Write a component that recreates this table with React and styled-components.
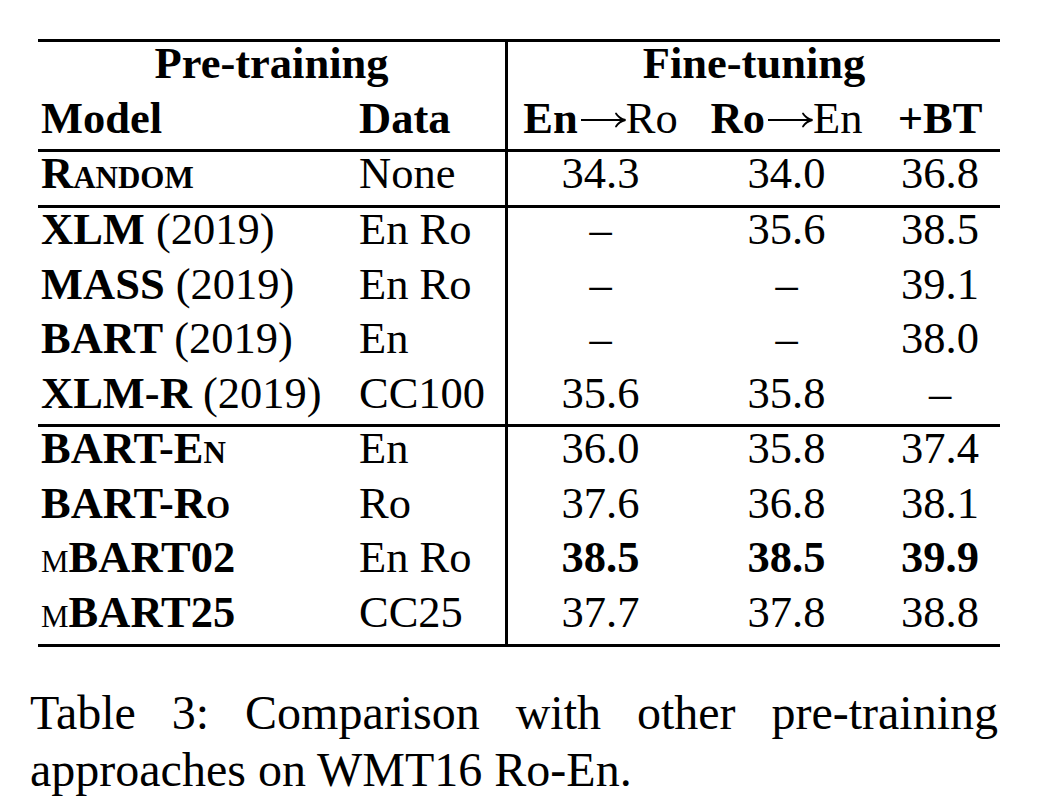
import React from "react";
import styled, { createGlobalStyle } from "styled-components";

const GlobalStyle = createGlobalStyle`
  html, body {
    margin: 0;
    padding: 0;
    background: #fff;
  }
  body {
    font-family: "Liberation Serif", "Times New Roman", serif;
    color: #000;
  }
`;

const Page = styled.div`
  width: 1046px;
  height: 802px;
  padding-top: 39px;
  box-sizing: border-box;
  overflow: hidden;
`;

const Table = styled.div`
  margin-left: 38px;
  width: 962px;
  display: flex;
  flex-direction: column;
`;

const Rule = styled.div`
  height: 3px;
  background: #000;
`;

const Row = styled.div`
  display: grid;
  grid-template-columns: 303px 164px 188px 187px 120px;
  height: ${(p) => p.$h}px;
  font-size: 44.5px;
  line-height: 42px;
`;

const Cell = styled.div`
  height: 100%;
  white-space: nowrap;
  text-align: ${(p) => p.$align || "left"};
  font-weight: ${(p) => (p.$bold ? 700 : 400)};
  padding-left: ${(p) =>
    p.$first ? "3px" : p.$divider ? "3px" : p.$align === "center" ? "0" : "18px"};
  grid-column: ${(p) => (p.$span ? `span ${p.$span}` : "auto")};
  box-shadow: ${(p) => (p.$divider ? "inset 3px 0 0 #000" : "none")};
`;

const Sc = styled.span`
  font-variant: small-caps;
  font-weight: ${(p) => (p.$bold ? 700 : 400)};
`;

const B = styled.span`
  font-weight: 700;
`;

const N = styled.span`
  font-weight: 400;
`;

const ArrowSvg = styled.svg`
  display: inline-block;
  width: 48px;
  height: 16px;
  vertical-align: 5px;
  margin: 0 -1px 0 1px;
`;

// math-style \rightarrow, the font one is too short
const Arrow = () => (
  <ArrowSvg viewBox="0 0 48 16" aria-label="→">
    <path d="M2 8 H46" stroke="#000" strokeWidth="2" fill="none" />
    <path
      d="M37 1.5 Q40 6.5 46.5 8 Q40 9.5 37 14.5"
      stroke="#000"
      strokeWidth="1.8"
      fill="none"
      strokeLinecap="round"
    />
  </ArrowSvg>
);

const Caption = styled.p`
  margin: 37px 0 0 30px;
  width: 968px;
  font-size: 48px;
  line-height: 57px;
  text-align: justify;
`;

const dash = "\u2013";

const groups = [
  {
    rows: [
      { model: <Sc $bold>Random</Sc>, data: "None", v: ["34.3", "34.0", "36.8"], h: 53 },
    ],
  },
  {
    rows: [
      { model: <><B>XLM</B> (2019)</>, data: "En Ro", v: [dash, "35.6", "38.5"], h: 54.7 },
      { model: <><B>MASS</B> (2019)</>, data: "En Ro", v: [dash, dash, "39.1"], h: 54.7 },
      { model: <><B>BART</B> (2019)</>, data: "En", v: [dash, dash, "38.0"], h: 54.7 },
      { model: <><B>XLM-R</B> (2019)</>, data: "CC100", v: ["35.6", "35.8", dash], h: 52 },
    ],
  },
  {
    rows: [
      { model: <B>BART-<Sc $bold>En</Sc></B>, data: "En", v: ["36.0", "35.8", "37.4"], h: 54.7 },
      { model: <B>BART-<Sc $bold>Ro</Sc></B>, data: "Ro", v: ["37.6", "36.8", "38.1"], h: 54.7 },
      { model: <><Sc>m</Sc><B>BART02</B></>, data: "En Ro", v: ["38.5", "38.5", "39.9"], bold: true, h: 54.7 },
      { model: <><Sc>m</Sc><B>BART25</B></>, data: "CC25", v: ["37.7", "37.8", "38.8"], h: 52.6 },
    ],
  },
];

const App = () => {
  return (
    <>
      <GlobalStyle />
      <Page>
        <Table>
          <Rule />
          {/* two header rows */}
          <Row $h={55}>
            <Cell $span={2} $align="center" $bold>Pre-training</Cell>
            <Cell $span={3} $align="center" $bold $divider>Fine-tuning</Cell>
          </Row>
          <Row $h={52}>
            <Cell $first $bold>Model</Cell>
            <Cell $bold>Data</Cell>
            <Cell $align="center" $divider><B>En</B><Arrow /><N>Ro</N></Cell>
            <Cell $align="center"><B>Ro</B><Arrow /><N>En</N></Cell>
            <Cell $align="center" $bold>+BT</Cell>
          </Row>
          <Rule />
          {groups.map((g, gi) => (
            <React.Fragment key={gi}>
              {g.rows.map((r, ri) => (
                <Row key={ri} $h={r.h}>
                  <Cell $first>{r.model}</Cell>
                  <Cell>{r.data}</Cell>
                  {r.v.map((val, vi) => (
                    <Cell key={vi} $align="center" $bold={r.bold} $divider={vi === 0}>
                      {val}
                    </Cell>
                  ))}
                </Row>
              ))}
              <Rule />
            </React.Fragment>
          ))}
        </Table>
        <Caption>
          Table 3: Comparison with other pre-training approaches on WMT16 Ro-En.
        </Caption>
      </Page>
    </>
  );
};

export default App;
